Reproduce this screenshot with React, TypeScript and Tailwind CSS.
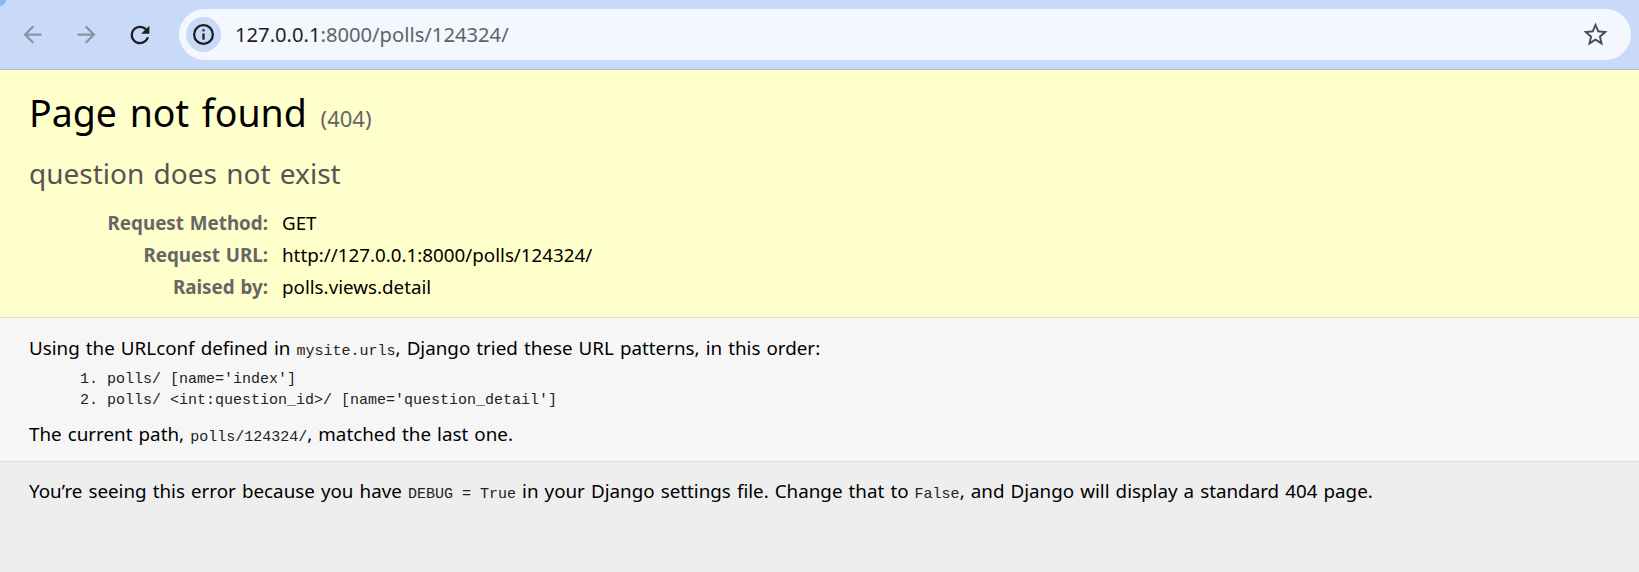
const sans = "font-['Noto_Sans','Open_Sans',sans-serif]";
const mono = "font-['Liberation_Mono',monospace] text-[15px] text-[#222222] [word-spacing:0]";

function Rows() {
  const rows = [
    ["Request Method:", "GET"],
    ["Request URL:", "http://127.0.0.1:8000/polls/124324/"],
    ["Raised by:", "polls.views.detail"],
  ];
  return (
    <div className="mt-[16px] flex flex-col">
      {rows.map(([k, v]) => (
        <div key={k} className="flex h-[32px] items-center text-[18.8px]">
          <div className="w-[253px] pr-[14px] text-right font-bold text-[#666666]">{k}</div>
          <div className="text-black">{v}</div>
        </div>
      ))}
    </div>
  );
}

export default function App() {
  return (
    <div className={`${sans} relative flex h-[572px] flex-col overflow-hidden bg-[#eeeeee] text-black`}>
      <div className="absolute left-0 top-0 h-[6px] w-[6px] rounded-br-full bg-[#8fb4ee]" />
      <div className="flex h-[70px] shrink-0 items-center border-b border-[#a9bad9] bg-[#c8daf8] pl-[19px] pr-[8px]">
        <svg width="27" height="27" viewBox="0 0 24 24" fill="#8a93a6"><path d="M20 11H7.83l5.59-5.59L12 4l-8 8 8 8 1.41-1.41L7.83 13H20v-2z" /></svg>
        <svg className="ml-[27px]" width="27" height="27" viewBox="0 0 24 24" fill="#8a93a6"><path d="M4 11h12.17l-5.59-5.59L12 4l8 8-8 8-1.41-1.41L16.17 13H4v-2z" /></svg>
        <svg className="ml-[26px]" width="28" height="28" viewBox="0 0 24 24" fill="#1f1f1f"><path d="M17.65 6.35C16.2 4.9 14.21 4 12 4c-4.42 0-7.99 3.58-7.99 8s3.57 8 7.99 8c3.73 0 6.84-2.55 7.73-6h-2.08c-.82 2.33-3.04 4-5.65 4-3.31 0-6-2.69-6-6s2.69-6 6-6c1.66 0 3.14.69 4.22 1.78L13 11h7V4l-2.35 2.35z" /></svg>
        <div className="ml-[25px] flex h-[51px] flex-1 items-center rounded-full bg-[#f4f7fd] pl-[7px] pr-[21px]">
          <div className="flex h-[35px] w-[35px] items-center justify-center rounded-full bg-[#c8daf8]">
            <svg width="25" height="25" viewBox="0 0 24 24" fill="none" stroke="#1f1f1f" strokeWidth="2.2"><circle cx="12" cy="12" r="9" /><path d="M12 11v6" /><path d="M12 7v2" /></svg>
          </div>
          <div className="ml-[14px] flex-1 text-[20.2px] text-[#5f6368]"><span className="text-[#1f1f1f]">127.0.0.1</span>:8000/polls/124324/</div>
          <svg width="29" height="29" viewBox="0 0 24 24" fill="#474a51"><path d="M22 9.24l-7.19-.62L12 2 9.19 8.63 2 9.24l5.46 4.73L5.82 21 12 17.27 18.18 21l-1.63-7.03L22 9.24zM12 15.4l-3.76 2.27 1-4.28-3.32-2.88 4.38-.38L12 6.1l1.71 4.04 4.38.38-3.32 2.88 1 4.28L12 15.4z" /></svg>
        </div>
      </div>

      <div className="h-[248px] shrink-0 border-b border-[#dddddd] bg-[#ffffcc] px-[29px] pt-[19px] [word-spacing:1px]">
        <h1 className="text-[37.5px] font-normal leading-[48px] [word-spacing:3px]">
          Page not found <span className="ml-[1px] text-[22px] text-[#666666]">(404)</span>
        </h1>
        <h2 className="mt-[13px] text-[28px] font-normal leading-[36px] text-[#555555] [word-spacing:2px]">question does not exist</h2>
        <Rows />
      </div>

      <div className="h-[144px] shrink-0 border-b border-[#dddddd] bg-[#f6f6f6] px-[29px] pt-[15px] text-[18.8px] [word-spacing:1.2px]">
        <p className="leading-[30px]">
          Using the URLconf defined in <code className={mono}>mysite.urls</code>, Django tried these URL patterns, in this order:
        </p>
        <ol className={`${mono} mt-[2px] list-decimal pl-[78px] leading-[21px]`}>
          <li>polls/ [name='index']</li>
          <li>polls/ &lt;int:question_id&gt;/ [name='question_detail']</li>
        </ol>
        <p className="mt-[8px] leading-[30px]">
          The current path, <code className={mono}>polls/124324/</code>, matched the last one.
        </p>
      </div>

      <div className="flex-1 bg-[#eeeeee] px-[29px] pt-[14px] text-[18.8px] leading-[30px] [word-spacing:1.2px]">
        <p>
          You’re seeing this error because you have <code className={mono}>DEBUG = True</code> in your Django settings file. Change that to <code className={mono}>False</code>, and Django will display a standard 404 page.
        </p>
      </div>
    </div>
  );
}
